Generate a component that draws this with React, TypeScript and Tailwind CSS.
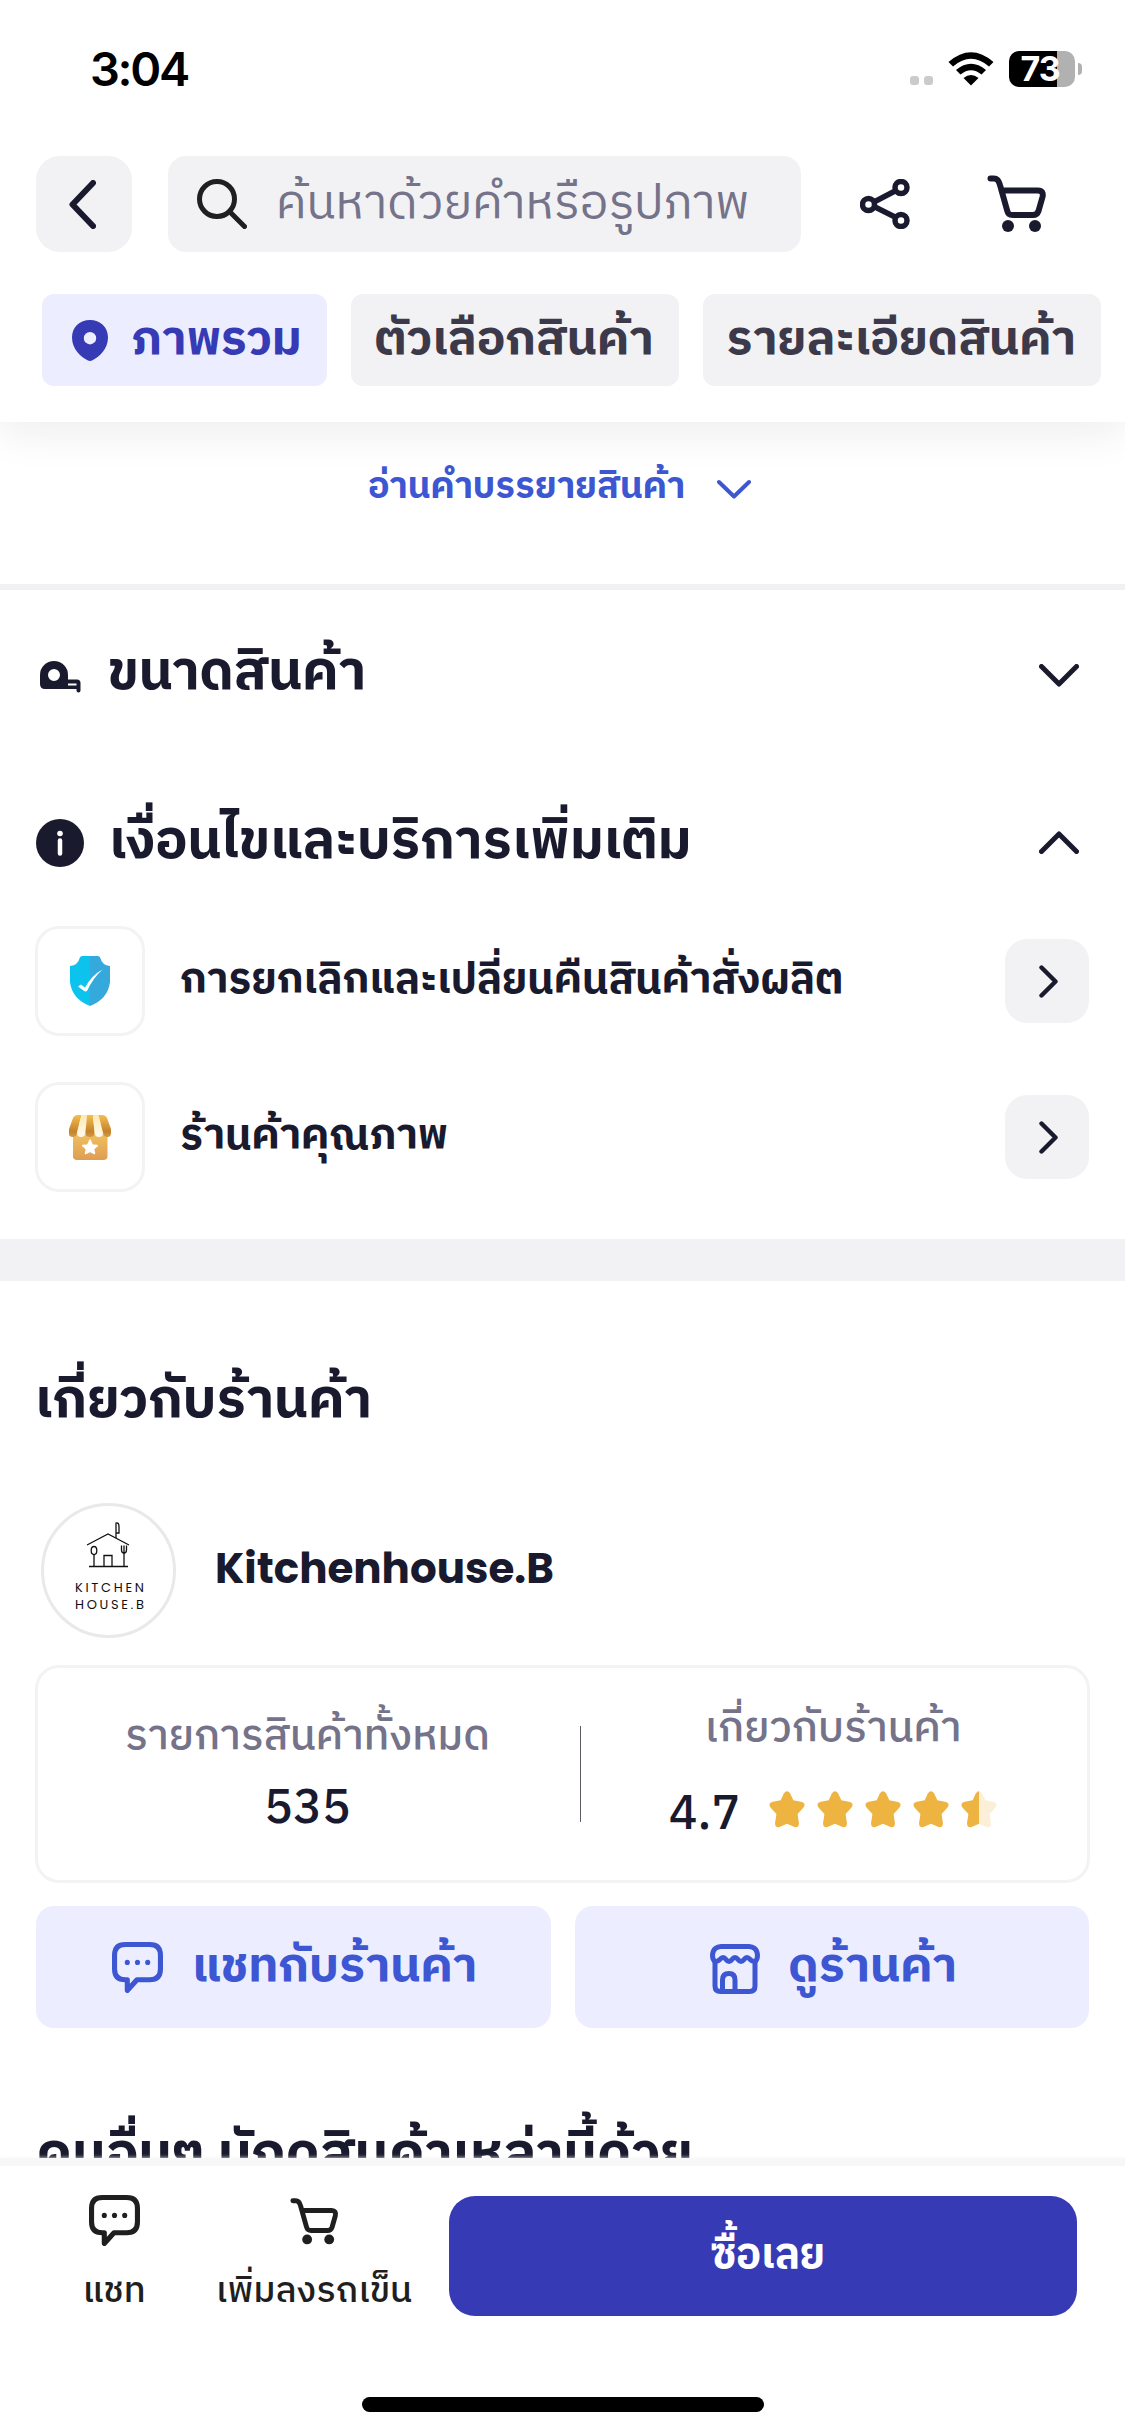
import React from 'react';

type IconProps = { className?: string };

const CartIcon: React.FC<IconProps> = ({ className }) => (
  <svg viewBox="0 0 60 58" className={className} fill="none" stroke="currentColor" strokeWidth="6" strokeLinecap="round" strokeLinejoin="round">
    <path d="M3.5 3.5H7C10 3.5 12 6 13 10L20 35C21 39 22 40 26 40H46C49 40 50.500 39 51.500 36L55.500 22C56.500 18 55 15.500 51 15.500H14.500" />
    <circle cx="21" cy="51" r="6" fill="currentColor" stroke="none" />
    <circle cx="48" cy="51" r="6" fill="currentColor" stroke="none" />
  </svg>
);

const ChatIcon: React.FC<IconProps> = ({ className }) => (
  <svg viewBox="0 0 50 50" className={className} fill="none" stroke="currentColor" strokeWidth="5" strokeLinejoin="round">
    <path d="M13 2.500H37Q47.500 2.500 47.500 13V26.500Q47.500 37 37 37H24.500L15 47.500V37H13Q2.500 37 2.500 26.500V13Q2.500 2.500 13 2.500Z" />
    <g fill="currentColor" stroke="none">
      <circle cx="15" cy="20" r="2.500" />
      <circle cx="25" cy="20" r="2.500" />
      <circle cx="35" cy="20" r="2.500" />
    </g>
  </svg>
);

const ShareIcon: React.FC<IconProps> = ({ className }) => (
  <svg viewBox="0 0 50 50" className={className} fill="none" stroke="currentColor" strokeWidth="5.5">
    <path d="M14 23L36 11.500M14 27.500L36 38.500" />
    <circle cx="8.500" cy="25.500" r="6" />
    <circle cx="41" cy="8.500" r="6" />
    <circle cx="41" cy="41.500" r="6" />
  </svg>
);

const StoreIcon: React.FC<IconProps> = ({ className }) => (
  <svg viewBox="0 0 50 50" className={className} fill="none" stroke="currentColor" strokeWidth="5" strokeLinejoin="round" strokeLinecap="round">
    <path d="M5 18V42Q5 47.500 10.500 47.500H39.500Q45 47.500 45 42V18" />
    <path d="M5 17.500C2.500 16 2.500 13.500 2.500 11C3 5 7 2.500 11 2.500H39C43 2.500 47 5 47.500 11C47.500 13.500 47.500 16 45 17.500C41 18.500 40 13.500 37 13.500C34 13.500 34 17.500 31 17.500C28 17.500 28 13.500 25 13.500C22 13.500 22 17.500 19 17.500C16 17.500 16 13.500 13 13.500C10 13.500 9 18.500 5 17.500Z" />
    <path d="M12.500 47V36Q12.500 29.500 19 29.500Q25 29.500 25 36V47" />
  </svg>
);

const TapeIcon: React.FC<IconProps> = ({ className }) => (
  <svg viewBox="0 0 42 32" className={className} fill="none">
    <path fill="currentColor" fillRule="evenodd" d="M0 14A14 14 0 0 1 28 14V18.500H37Q40.500 18.500 40.500 22V29.500Q40.500 31.500 38.500 31.500T36.500 29.500V28H5Q0 28 0 23ZM14 8A6 6 0 1 0 14 20A6 6 0 1 0 14 8ZM28 22.500V24.500H36.500V22.500Z" />
  </svg>
);

const ShieldIcon: React.FC<IconProps> = ({ className }) => (
  <svg viewBox="0 0 40 50" className={className}>
    <path fill="#0cc3ee" d="M20 0H12Q10 0 9.500 2.500Q8 9 0 10V26Q2 43 20 50Z" />
    <path fill="#36a9dc" d="M20 0H28Q30 0 30.500 2.500Q32 9 40 10V26Q38 43 20 50Z" />
    <path fill="#fff" d="M8 30.500L11 28.500L15 31.500Q22 19 32.500 13.500Q23 22 17 35Q15 36 13.500 34.500Z" />
  </svg>
);

const QualityShopIcon: React.FC<IconProps> = ({ className }) => (
  <svg viewBox="0 0 42 45" className={className}>
    <defs>
      <linearGradient id="shopBody" x1="0" y1="0" x2="0" y2="1">
        <stop offset="0" stopColor="#f8cb62" />
        <stop offset="1" stopColor="#de9d54" />
      </linearGradient>
      <linearGradient id="shopDark" x1="0" y1="0" x2="0" y2="1">
        <stop offset="0" stopColor="#f4bd50" />
        <stop offset="0.750" stopColor="#c4832c" />
        <stop offset="1" stopColor="#d2994b" />
      </linearGradient>
      <linearGradient id="shopLight" x1="0" y1="0" x2="0" y2="1">
        <stop offset="0" stopColor="#fce9b0" />
        <stop offset="1" stopColor="#fffaf0" />
      </linearGradient>
    </defs>
    <rect x="4" y="10" width="34.500" height="35" rx="4" fill="url(#shopBody)" />
    <path fill="url(#shopDark)" d="M9 0H12.500L8 17.500Q7.500 22 3.500 22T0 17.500V14L4 3Q5.500 0 9 0Z" />
    <path fill="url(#shopLight)" d="M12.500 0H18L16.500 17.500Q16 22 12 22T8 17.500Z" />
    <path fill="url(#shopDark)" d="M18 0H24L25.500 17.500Q25.500 22 21 22T16.500 17.500Z" />
    <path fill="url(#shopLight)" d="M24 0H29.500L34 17.500Q34 22 30 22T25.500 17.500Z" />
    <path fill="url(#shopDark)" d="M29.500 0H33Q36.500 0 38 3L42 14V17.500Q42 22 38.500 22T34 17.500Z" />
    <path fill="#fff" stroke="#fff" strokeWidth="1.500" strokeLinejoin="round" d="M21 25L23.300 30L28.300 30.600L24.500 34L25.500 38.500L21 36.300L16.500 38.500L17.500 34L13.700 30.600L18.700 30Z" />
  </svg>
);

const starPath =
  'M14.800 2.500Q18 -2 21.200 2.500L24.300 9.300L32 10.700Q37.500 12 34.500 16.500L28.600 23L30 32.500Q29.800 37 25.500 36L18 32.700L10.500 36Q6.200 37 6 32.500L7.400 23L1.500 16.500Q-1.500 12 4 10.700L11.700 9.300Z';

const Star: React.FC<{ half?: boolean }> = ({ half }) => (
  <svg viewBox="0 0 36 37" className="w-9 h-[37px]">
    <defs>
      <clipPath id="starLeft">
        <rect width="18" height="37" />
      </clipPath>
    </defs>
    <path d={starPath} fill={half ? '#fcefd8' : '#edb442'} />
    {half && <path d={starPath} fill="#edb442" clipPath="url(#starLeft)" />}
  </svg>
);

const Chevron: React.FC<IconProps & { d: string; box: string; width?: number }> = ({ className, d, box, width = 5 }) => (
  <svg viewBox={box} className={className} fill="none" stroke="currentColor" strokeWidth={width} strokeLinecap="round" strokeLinejoin="round">
    <path d={d} />
  </svg>
);

const ShopAvatar: React.FC = () => (
  <div className="w-[135px] h-[135px] rounded-full border-3 border-[#e9e9eb] shrink-0">
    <svg viewBox="0 0 129 129" className="w-full h-full" fill="none" stroke="#111" strokeWidth="1.300">
      <path d="M43 39L64 28L85 39M45 60.500H84M60 60V49.500H68V60M50 49V60M80 46V60" />
      <path d="M72 32V17Q75 16 75 21V27H72" />
      <ellipse cx="50" cy="44.500" rx="2.800" ry="4" />
      <path d="M77.500 39.500V44Q77.500 47 80 47T82.500 44V39.500M80 39.500V47" />
      <g fill="#111" stroke="none" className="font-['Poppins','Inter',sans-serif] font-normal" fontSize="13">
        <text x="31" y="86" textLength="69">KITCHEN</text>
        <text x="31" y="103" textLength="69">HOUSE.B</text>
      </g>
    </svg>
  </div>
);

const StatusBar: React.FC = () => (
  <div className="h-[156px] pl-[90px] pr-[43px] flex items-start justify-between">
    <span className="mt-[39px] font-['Inter',sans-serif] font-semibold text-[47px] leading-[60px] tracking-[-2.3px] text-black">3:04</span>
    <div className="flex items-center h-10 mt-[49px]">
      <div className="flex gap-[5px] mt-[23px] mr-[15px]">
        <span className="size-[9px] rounded-[3px] bg-[#cbcbcb]" />
        <span className="size-[9px] rounded-[3px] bg-[#cbcbcb]" />
      </div>
      <svg viewBox="0 0 46 34" className="w-[46px] h-[34px] mr-[15px]">
        <path d="M0.500 10Q23 -9.500 45.500 10L41 14.500Q23 -1 5 14.500Z" />
        <path d="M8 18Q23 5.500 38 18L33.500 22.500Q23 14 12.500 22.500Z" />
        <path d="M15.500 26Q23 20 30.500 26L23 33.500Z" />
      </svg>
      <div className="w-[66px] h-9 rounded-[10px] bg-linear-to-r from-black from-73% to-[#b1b1b1] to-73% flex items-center justify-center">
        <span className="mr-1 font-['Inter',sans-serif] font-bold text-[34px] leading-9 tracking-[-1px] text-white">73</span>
      </div>
      <span className="w-1 h-3 ml-[3px] rounded-r-full bg-[#b1b1b1]" />
    </div>
  </div>
);

const Header: React.FC = () => (
  <header className="relative z-10 h-[422px] shrink-0 bg-white shadow-[0_10px_40px_rgba(20,20,40,0.08)]">
    <StatusBar />
    <div className="flex items-center pl-9 h-24">
      <button className="w-24 h-24 rounded-[24px] bg-[#f2f2f4] flex items-center justify-center pr-1">
        <Chevron box="0 0 27 49" d="M24 3L3.500 24.500L24 46" width={6} className="w-[27px] h-[49px]" />
      </button>
      <div className="ml-9 w-[633px] h-24 rounded-[18px] bg-[#f2f2f4] flex items-center pl-[29px]">
        <svg viewBox="0 0 50 50" className="size-[50px]" fill="none" stroke="#1f1f1f" strokeWidth="5" strokeLinecap="round">
          <circle cx="20" cy="20" r="17.500" />
          <path d="M32.500 32.500L47.500 47.500" />
        </svg>
        <span className="ml-[29px] text-[48px] leading-[72px] text-[#75738a] whitespace-nowrap">ค้นหาด้วยคำหรือรูปภาพ</span>
      </div>
      <ShareIcon className="size-[50px] ml-[59px]" />
      <CartIcon className="w-[60px] h-[58px] ml-[77px]" />
    </div>
    <div className="mt-[42px] ml-[42px] flex gap-6 h-[92px] font-bold text-[48px] leading-[72px] text-[#3c3a4a] whitespace-nowrap">
      <div className="w-[285px] rounded-[12px] bg-[#ecedfe] text-[#363ab5] flex items-center pl-[30px] gap-6">
        <svg viewBox="0 0 36 41" className="w-9 h-[41px]" fill="currentColor">
          <path fillRule="evenodd" d="M18 0C8 0 0 7 0 17.500C0 29 9 37 15.500 40.300Q18 41.500 20.500 40.300C27 37 36 29 36 17.500C36 7 28 0 18 0ZM18 12A6.200 6.200 0 1 0 18 24.400A6.200 6.200 0 1 0 18 12Z" />
        </svg>
        <span className="-ml-px">ภาพรวม</span>
      </div>
      <div className="w-[328px] rounded-[12px] bg-[#f2f2f4] flex items-center justify-center pr-0.5">ตัวเลือกสินค้า</div>
      <div className="w-[398px] rounded-[12px] bg-[#f2f2f4] flex items-center justify-center pr-0.5">รายละเอียดสินค้า</div>
    </div>
  </header>
);

const services = [
  { label: 'การยกเลิกและเปลี่ยนคืนสินค้าสั่งผลิต', icon: <ShieldIcon className="w-10 h-[50px]" /> },
  { label: 'ร้านค้าคุณภาพ', icon: <QualityShopIcon className="w-[42px] h-[45px]" /> },
];

const ProductSections: React.FC = () => (
  <section className="h-[817px] shrink-0">
    <div className="h-[162px] flex justify-center pt-[39px] pr-1.5">
      <div className="flex items-center h-[54px] text-[#3d56d2]">
        <span className="font-bold text-[36px] leading-[54px] whitespace-nowrap">อ่านคำบรรยายสินค้า</span>
        <Chevron box="0 0 34 20" d="M2 3L17 17.500L32 3" width={4} className="w-[34px] h-5 ml-8 mt-[2px]" />
      </div>
    </div>
    <div className="h-1.5 bg-[#f1f1f3]" />
    <div className="h-[168px] px-9 flex items-center">
      <TapeIcon className="w-[42px] h-8 ml-1 mt-1.5" />
      <span className="flex-1 ml-[26px] font-bold text-[54px] leading-[80px]">ขนาดสินค้า</span>
      <Chevron box="0 0 40 23" d="M2.500 2.500L20 20L37.500 2.500" className="w-10 h-[23px] mr-2.5 mt-0.5" />
    </div>
    <div className="h-[168px] px-9 flex items-center">
      <svg viewBox="0 0 48 48" className="size-12 mt-0.5">
        <circle cx="24" cy="24" r="24" fill="#1a1a2e" />
        <circle cx="24" cy="14.500" r="2.800" fill="#fff" />
        <path d="M24 21.500V34.500" stroke="#fff" strokeWidth="4.500" strokeLinecap="round" />
      </svg>
      <span className="flex-1 ml-[25px] mt-0.5 font-bold text-[54px] leading-[80px]">เงื่อนไขและบริการเพิ่มเติม</span>
      <Chevron box="0 0 40 23" d="M2.500 20.500L20 3L37.500 20.500" className="w-10 h-[23px] mr-2.5" />
    </div>
    <div className="pl-[35px] pr-9 flex flex-col gap-[46px]">
      {services.map((s) => (
        <div key={s.label} className="h-[110px] flex items-center">
          <div className="size-[110px] rounded-[24px] border-3 border-[#f3f3f5] flex items-center justify-center">{s.icon}</div>
          <span className="flex-1 ml-[35px] font-bold text-[42px] leading-[64px] whitespace-nowrap">{s.label}</span>
          <button className="size-[84px] rounded-[22px] bg-[#f2f2f4] flex items-center justify-center">
            <Chevron box="0 0 19 33" d="M2.500 2.500L16.500 16.500L2.500 30.500" width={4.4} className="w-[19px] h-[33px] ml-0.5" />
          </button>
        </div>
      ))}
    </div>
  </section>
);

const ShopSection: React.FC = () => (
  <section className="px-[35px]">
    <h2 className="h-[222px] pt-[81px] font-bold text-[54px] leading-[80px]">เกี่ยวกับร้านค้า</h2>
    <div className="ml-[6px] flex items-center">
      <ShopAvatar />
      <span className="ml-[39px] mb-1 font-['Poppins','Inter',sans-serif] font-bold text-[42px] leading-[64px]">Kitchenhouse.B</span>
    </div>
    <div className="mt-[27px] w-[1055px] h-[218px] rounded-[24px] border-3 border-[#f3f3f5] flex items-center">
      <div className="w-[539px] pb-0.5 flex flex-col items-center font-medium">
        <span className="text-[42px] leading-[60px] text-[#75738a]">รายการสินค้าทั้งหมด</span>
        <span className="mt-3 text-[48px] leading-[60px]">535</span>
      </div>
      <div className="ml-[3px] w-px h-24 bg-[#5b5b66]" />
      <div className="flex-1 pr-0.5 pb-0.5 flex flex-col items-center font-medium">
        <span className="text-[42px] leading-[60px] text-[#75738a]">เกี่ยวกับร้านค้า</span>
        <div className="mt-3 flex items-center">
          <span className="text-[48px] leading-[68px] pt-2.5 -mb-0.5">4.7</span>
          <div className="flex gap-3 ml-[29px]">
            {[1, 2, 3, 4].map((n) => <Star key={n} />)}
            <Star half />
          </div>
        </div>
      </div>
    </div>
    <div className="mt-[23px] ml-px flex gap-6 h-[122px] font-bold text-[48px] leading-[70px] text-[#3d56d2]">
      <button className="w-[515px] rounded-[18px] bg-[#ecedfe] flex items-center justify-center pl-0.5">
        <ChatIcon className="size-[51px] mr-[29px]" />
        <span>แชทกับร้านค้า</span>
      </button>
      <button className="w-[514px] rounded-[18px] bg-[#ecedfe] flex items-center justify-center pl-[3px]">
        <StoreIcon className="size-[50px] mr-[28px] mt-1" />
        <span>ดูร้านค้า</span>
      </button>
    </div>
    <h2 className="mt-[88px] ml-px font-bold text-[54px] leading-[80px] whitespace-nowrap">คนอื่นๆ มักดูสินค้าเหล่านี้ด้วย</h2>
  </section>
);

const BottomBar: React.FC = () => (
  <footer className="relative h-[278px] shrink-0 bg-white border-t-8 border-[#f7f7f8] shadow-[0_0_4px_#f7f7f8]">
    <div className="flex text-[#1f1f1f] text-[36px] leading-[54px] font-medium">
      <div className="w-[132px] ml-12 pt-[29px] flex flex-col items-center">
        <ChatIcon className="size-[51px]" />
        <span className="mt-[19px]">แชท</span>
      </div>
      <div className="w-[200px] ml-[34px] pt-[31px] flex flex-col items-center">
        <CartIcon className="w-[49px] h-[49px]" />
        <span className="mt-[19px] whitespace-nowrap">เพิ่มลงรถเข็น</span>
      </div>
      <button className="ml-[35px] mt-[30px] w-[628px] h-[120px] rounded-[26px] bg-[#363ab5] text-white font-bold text-[42px] pl-2.5">ซื้อเลย</button>
    </div>
    <div className="absolute left-[362px] top-[231px] w-[402px] h-[15px] rounded-full bg-black" />
  </footer>
);

export default function App() {
  return (
    <div className="w-[1125px] h-[2436px] overflow-hidden flex flex-col bg-white text-[#1a1a2e] font-['IBM_Plex_Sans_Thai','Noto_Sans_Thai','Noto_Sans',sans-serif]">
      <Header />
      <main className="flex-1 min-h-0 overflow-hidden flex flex-col">
        <ProductSections />
        <div className="h-[42px] shrink-0 bg-[#f2f2f4]" />
        <ShopSection />
      </main>
      <BottomBar />
    </div>
  );
}
